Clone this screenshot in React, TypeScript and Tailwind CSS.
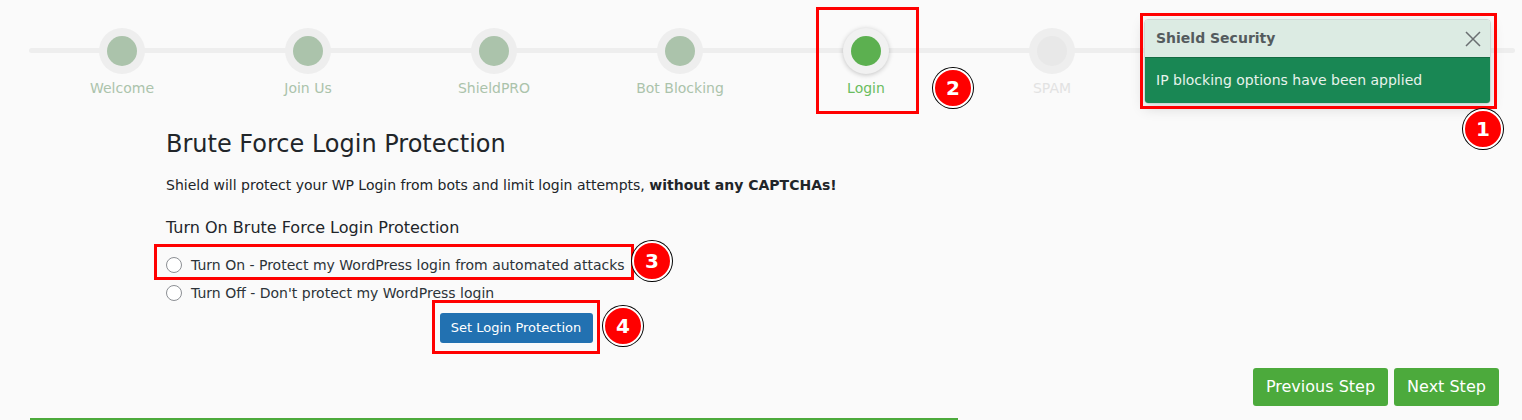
const steps = [
  { name: "Welcome", state: "done" },
  { name: "Join Us", state: "done" },
  { name: "ShieldPRO", state: "done" },
  { name: "Bot Blocking", state: "done" },
  { name: "Login", state: "active" },
  { name: "SPAM", state: "todo" },
  { name: "", state: "todo" },
  { name: "", state: "todo" },
];

function Step({ name, state }: { name: string; state: string }) {
  const inner =
    state === "active" ? "bg-[#5cb050]" : state === "done" ? "bg-[#abc3ab]" : "bg-[#e8e8e8]";
  const label =
    state === "active" ? "text-[#6abd5f]" : state === "done" ? "text-[#abc3ab]" : "text-[#e2e2e2]";
  return (
    <div className="w-[186px] flex flex-col items-center">
      <div
        className={`w-[46px] h-[46px] rounded-full flex items-center justify-center ${
          state === "active" ? "bg-[#f1f1f1] shadow-[0_1px_5px_rgba(0,0,0,0.22)]" : "bg-[#eeeeee]"
        }`}
      >
        <div className={`w-[30px] h-[30px] rounded-full ${inner}`} />
      </div>
      <div className={`mt-[4px] h-[20px] text-[14px] leading-[20px] ${label}`}>{name}</div>
    </div>
  );
}

function Radio({ label }: { label: string }) {
  return (
    <label className="flex items-center h-[20px] text-[14px] text-[#2c3338]">
      <span className="w-[16px] h-[16px] rounded-full border border-[#8c8f94] bg-white mr-[9px]" />
      {label}
    </label>
  );
}

function Badge({ n, className }: { n: number; className: string }) {
  return (
    <div
      className={`absolute w-[40px] h-[40px] rounded-full bg-[#ff0000] border-2 border-white ring-1 ring-black flex items-center justify-center text-white text-[20px] font-bold ${className}`}
    >
      {n}
    </div>
  );
}

export default function App() {
  return (
    <div className="relative h-[420px] w-[1522px] overflow-hidden bg-[#fafafa] font-['DejaVu_Sans',sans-serif]">
      {/* Stepper */}
      <div className="relative pt-[28px] pl-[29px]">
        <div className="absolute left-[29px] right-[7px] top-[48px] h-[5px] rounded-full bg-[#eeeeee]" />
        <div className="relative flex">
          {steps.map((s, i) => (
            <Step key={i} name={s.name} state={s.state} />
          ))}
        </div>
      </div>

      {/* Content */}
      <div className="ml-[166px] w-[700px]">
        <h2 className="mt-[32px] text-[24px] leading-[29px] text-[#212529]">Brute Force Login Protection</h2>
        <p className="mt-[16px] text-[14px] leading-[20px] text-[#212529]">
          Shield will protect your WP Login from bots and limit login attempts, <b>without any CAPTCHAs!</b>
        </p>
        <h3 className="mt-[21px] text-[16px] leading-[24px] text-[#212529]">Turn On Brute Force Login Protection</h3>
        <div className="mt-[15px] flex flex-col gap-[8px]">
          <Radio label="Turn On - Protect my WordPress login from automated attacks" />
          <Radio label="Turn Off - Don't protect my WordPress login" />
        </div>
        <div className="mt-[10px] flex justify-center">
          <button className="w-[153px] h-[30px] rounded-[3px] bg-[#2271b1] text-white text-[13px]">
            Set Login Protection
          </button>
        </div>
      </div>

      {/* Nav */}
      <div className="mt-[25px] flex justify-end gap-[6px] pr-[23px]">
        <button className="w-[135px] h-[38px] rounded-[3px] bg-[#4caa3c] text-white text-[16px]">Previous Step</button>
        <button className="w-[105px] h-[38px] rounded-[3px] bg-[#4caa3c] text-white text-[16px]">Next Step</button>
      </div>
      <div className="mt-[12px] ml-[30px] w-[928px] h-[2px] bg-[#4caa3c]" />

      {/* Toast */}
      <div className="absolute left-[1144px] top-[19px] w-[347px] rounded-[4px] overflow-hidden shadow-[0_4px_14px_rgba(0,0,0,0.15)] border border-[#d0d8d3]">
        <div className="h-[38px] flex items-center justify-between pl-[11px] pr-[8px] bg-[#dcebe3] border-b border-[#146c43]">
          <span className="text-[14px] font-bold text-[#545b5e]">Shield Security</span>
          <svg width="18" height="18" viewBox="0 0 18 18" fill="none">
            <path d="M2 2L16 16M16 2L2 16" stroke="#6b6f72" strokeWidth="1.5" />
          </svg>
        </div>
        <div className="h-[45px] flex items-center pl-[11px] bg-[#198754] text-[14px] text-[#e8f3ec]">
          IP blocking options have been applied
        </div>
      </div>

      {/* Annotations */}
      <div className="absolute left-[1140px] top-[13px] w-[357px] h-[96px] border-[3px] border-[#ff0000]" />
      <div className="absolute left-[816px] top-[7px] w-[103px] h-[107px] border-[3px] border-[#ff0000]" />
      <div className="absolute left-[154px] top-[244px] w-[480px] h-[36px] border-[3px] border-[#ff0000]" />
      <div className="absolute left-[432px] top-[300px] w-[168px] h-[54px] border-[3px] border-[#ff0000]" />
      <Badge n={1} className="left-[1463px] top-[109px]" />
      <Badge n={2} className="left-[933px] top-[68px]" />
      <Badge n={3} className="left-[632px] top-[241px]" />
      <Badge n={4} className="left-[603px] top-[306px]" />
    </div>
  );
}
